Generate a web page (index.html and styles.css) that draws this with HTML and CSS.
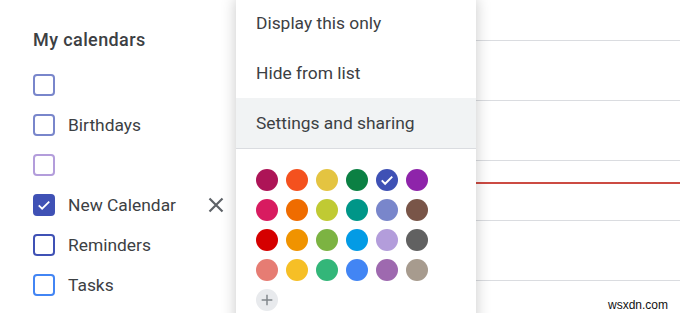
FILE: index.html
```html
<!DOCTYPE html>
<html lang="en">
<head>
	<meta charset="utf-8" />
	<title>My calendars</title>
	<link rel="stylesheet" href="styles.css">
</head>
<body>
	<div id="page">
		<div id="sidebar">
			<h2 class="sideTitle">My calendars</h2>
			<div class="calRow">
				<span class="box lavender"></span>
				<span class="calName"></span>
			</div>
			<div class="calRow">
				<span class="box lavender"></span>
				<span class="calName">Birthdays</span>
			</div>
			<div class="calRow">
				<span class="box wisteria"></span>
				<span class="calName"></span>
			</div>
			<div class="calRow">
				<span class="box blueberry checked">
					<svg viewBox="0 0 24 24" width="18" height="18"><path d="M5 12.5l4.5 4.5L19 7.5" fill="none" stroke="#fff" stroke-width="2.4"/></svg>
				</span>
				<span class="calName">New Calendar</span>
				<span class="removeBtn">
					<svg viewBox="0 0 24 24" width="24" height="24"><path d="M5.5 5.5l13 13M18.5 5.5l-13 13" stroke="#5f6368" stroke-width="2.2"/></svg>
				</span>
			</div>
			<div class="calRow">
				<span class="box blueberry"></span>
				<span class="calName">Reminders</span>
			</div>
			<div class="calRow">
				<span class="box peacock"></span>
				<span class="calName">Tasks</span>
			</div>
		</div>

		<div id="grid">
			<div class="slot"></div>
			<div class="slot"></div>
			<div class="slot"></div>
			<div class="slot"></div>
			<div class="slot"></div>
			<div id="nowLine"></div>
		</div>

		<div id="menu">
			<div class="menuItem">Display this only</div>
			<div class="menuItem">Hide from list</div>
			<div class="menuItem active">Settings and sharing</div>
			<div class="swatches">
				<span class="dot" style="background:#ad1457"></span>
				<span class="dot" style="background:#f4511e"></span>
				<span class="dot" style="background:#e4c441"></span>
				<span class="dot" style="background:#0b8043"></span>
				<span class="dot" style="background:#3f51b5">
					<svg viewBox="0 0 24 24" width="18" height="18"><path d="M5 12.5l4.5 4.5L19 7.5" fill="none" stroke="#fff" stroke-width="2.6"/></svg>
				</span>
				<span class="dot" style="background:#8e24aa"></span>

				<span class="dot" style="background:#d81b60"></span>
				<span class="dot" style="background:#ef6c00"></span>
				<span class="dot" style="background:#c0ca33"></span>
				<span class="dot" style="background:#009688"></span>
				<span class="dot" style="background:#7986cb"></span>
				<span class="dot" style="background:#795548"></span>

				<span class="dot" style="background:#d50000"></span>
				<span class="dot" style="background:#f09300"></span>
				<span class="dot" style="background:#7cb342"></span>
				<span class="dot" style="background:#039be5"></span>
				<span class="dot" style="background:#b39ddb"></span>
				<span class="dot" style="background:#616161"></span>

				<span class="dot" style="background:#e67c73"></span>
				<span class="dot" style="background:#f6bf26"></span>
				<span class="dot" style="background:#33b679"></span>
				<span class="dot" style="background:#4285f4"></span>
				<span class="dot" style="background:#9e69af"></span>
				<span class="dot" style="background:#a79b8e"></span>

				<span class="dot addDot">
					<svg viewBox="0 0 24 24" width="16" height="16"><path d="M12 4v16M4 12h16" stroke="#80868b" stroke-width="2.2"/></svg>
				</span>
			</div>
		</div>

		<div id="watermark">wsxdn.com</div>
	</div>
</body>
</html>
```

FILE: styles.css
```css
body{
	margin:0;
	background:#ffffff;
	font-family:Roboto,"Liberation Sans",sans-serif;
	color:#3c4043;
}

#page{
	position:relative;
	display:flex;
	width:680px;
	height:313px;
	overflow:hidden;
}

/* left column */
#sidebar{
	width:236px;
	flex-shrink:0;
	padding:28px 0 0 33px;
	box-sizing:border-box;
}

.sideTitle{
	margin:0 0 13px 0;
	height:24px;
	line-height:24px;
	font-size:18px;
	font-weight:500;
	letter-spacing:0.4px;
	color:#3c4043;
}

.calRow{
	display:flex;
	align-items:center;
	height:40px;
	padding-right:8px;
}

.box{
	width:22px;
	height:22px;
	box-sizing:border-box;
	border:2.8px solid;
	border-radius:4px;
	flex-shrink:0;
	display:flex;
	align-items:center;
	justify-content:center;
}

.lavender{ border-color:#7986cb; }
.wisteria{ border-color:#b39ddb; }
.blueberry{ border-color:#3f51b5; }
.peacock{ border-color:#4285f4; }
.checked{ background:#3f51b5; }

.calName{
	margin-left:13px;
	font-size:17.4px;
	color:#3c4043;
}

.removeBtn{
	margin-left:auto;
	width:24px;
	height:24px;
	display:flex;
}

/* day grid behind the menu */
#grid{
	position:relative;
	flex:1;
	padding-top:40px;
}

.slot{
	height:59px;
	border-top:1px solid #dadce0;
}

#nowLine{
	position:absolute;
	left:0;
	right:0;
	top:182px;
	height:2px;
	background:#cc4b43;
}

/* popup menu */
#menu{
	position:absolute;
	left:236px;
	top:-2px;
	width:240px;
	height:330px;
	background:#ffffff;
	box-shadow:0 0 14px rgba(0,0,0,0.22);
	z-index:10;
}

.menuItem{
	height:50px;
	line-height:50px;
	padding-left:20px;
	font-size:17.4px;
	color:#3c4043;
}

.menuItem.active{
	background:#f1f3f4;
	border-bottom:1px solid #dadce0;
}

.swatches{
	display:grid;
	grid-template-columns:repeat(6,22px);
	grid-auto-rows:22px;
	column-gap:8px;
	row-gap:8px;
	padding:20px 0 0 20px;
}

.dot{
	width:22px;
	height:22px;
	border-radius:50%;
	display:flex;
	align-items:center;
	justify-content:center;
}

.addDot{
	background:#e8eaed;
}

#watermark{
	position:absolute;
	right:12px;
	bottom:0;
	font-family:"Liberation Sans",Arial,sans-serif;
	font-size:12px;
	color:#111;
	line-height:16px;
}
```
